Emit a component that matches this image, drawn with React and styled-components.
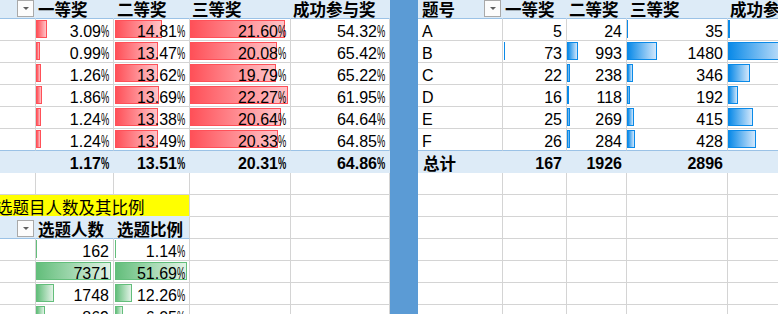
import React from 'react';
import styled, { createGlobalStyle } from 'styled-components';

// ============================================
// THEME VALUES
// ============================================

const GRID = '#d4d4d4';
const HEAD_BG = '#ddebf7';
const HEAD_LINE = '#9bc2e6';
const TITLE_BG = '#ffff00';

const TONES = {
  red: ['#ff5058', '#ffc4c8'],
  blue: ['#0a8ae8', '#d2e7fb'],
  green: ['#63be7b', '#e2f2e6'],
};

const LEFT_COLS = [36, 78, 76, 101, 99];
const RIGHT_COLS = [85, 64, 60, 101, 100];

// ============================================
// STYLED COMPONENTS
// ============================================

const GlobalStyle = createGlobalStyle`
  html, body {
    margin: 0;
    padding: 0;
    background: #fff;
  }
  body {
    width: 778px;
    height: 314px;
    overflow: hidden;
    font-family: "Liberation Sans", "Noto Sans CJK SC", sans-serif;
    font-size: 16px;
    color: #000;
  }
`;

const Window = styled.div`
  display: flex;
  width: 778px;
  height: 314px;
  overflow: hidden;
  background: #fff;
`;

const Pane = styled.div`
  flex: 0 0 ${p => p.$w}px;
  width: ${p => p.$w}px;
  display: flex;
  flex-direction: column;
  overflow: hidden;
`;

const Split = styled.div`
  flex: 0 0 28px;
  background: #5b9bd5;
`;

const Row = styled.div`
  display: flex;
  flex: 0 0 ${p => p.$h || 22}px;
  height: ${p => p.$h || 22}px;
`;

const Cell = styled.div`
  position: relative;
  flex: 0 0 ${p => p.$w}px;
  width: ${p => p.$w}px;
  height: 100%;
  box-sizing: border-box;
  display: flex;
  align-items: flex-end;
  justify-content: ${p => (p.$split ? 'space-between' : p.$right ? 'flex-end' : 'flex-start')};
  padding: 0 ${p => p.$pr ?? (p.$right ? 4 : 1)}px 1px ${p => p.$pl ?? 2}px;
  background: ${p => p.$bg || 'transparent'};
  border-right: 1px solid ${p => p.$vline || p.$bg || GRID};
  border-bottom: 1px solid ${p => p.$line || GRID};
  font-weight: ${p => (p.$bold ? 700 : 400)};
  line-height: 14px;
  white-space: nowrap;
  overflow: hidden;
`;

const HeadText = styled.span`
  position: relative;
  font-size: 16.5px;
  font-weight: ${p => (p.$light ? 400 : 700)};
  margin-left: ${p => p.$shift || 0}px;
`;

const Val = styled.span`
  position: relative;
  z-index: 1;
`;

const PctSign = styled.span`
  display: inline-block;
  width: 8px;
  transform: scaleX(0.58);
  transform-origin: 0 100%;
`;

const DropBtn = styled.span`
  flex: 0 0 17px;
  width: 17px;
  height: 17px;
  box-sizing: border-box;
  border: 1px solid #a9a9a9;
  background: #fcfcfc;
  display: flex;
  align-items: center;
  justify-content: center;

  &::after {
    content: '';
    border-left: 3px solid transparent;
    border-right: 3px solid transparent;
    border-top: 3px solid #5f5f5f;
  }
`;

const Bar = styled.span`
  position: absolute;
  left: ${p => p.$x || 0}px;
  top: 1px;
  height: 18px;
  width: ${p => p.$w}px;
  box-sizing: border-box;
  border: ${p => (p.$w > 2 ? `1px solid ${TONES[p.$tone][0]}` : 'none')};
  background: ${p =>
    p.$w > 2
      ? `linear-gradient(90deg, ${TONES[p.$tone][0]} 0%, ${TONES[p.$tone][1]} 100%)`
      : TONES[p.$tone][0]};
`;

// ============================================
// DATA
// ============================================

const prizeRows = [
  [['3.09%', 11], ['14.81%', 47], ['21.60%', 95], '54.32%'],
  [['0.99%', 4], ['13.47%', 43], ['20.08%', 87], '65.42%'],
  [['1.26%', 5], ['13.62%', 43], ['19.79%', 86], '65.22%'],
  [['1.86%', 6], ['13.69%', 44], ['22.27%', 98], '61.95%'],
  [['1.24%', 5], ['13.38%', 43], ['20.64%', 91], '64.64%'],
  [['1.24%', 5], ['13.49%', 43], ['20.33%', 88], '64.85%'],
];
const prizeTotal = ['1.17%', '13.51%', '20.31%', '64.86%'];

const pickRows = [
  [['162', 1], ['1.14%', 1]],
  [['7371', 75], ['51.69%', 72]],
  [['1748', 18], ['12.26%', 17]],
  [['869', 9], ['6.05%', 8]],
];

const questionRows = [
  { id: 'A', cells: [['5', 0], ['24', 0], ['35', 1], ['', 2]] },
  { id: 'B', cells: [['73', 1, 1], ['993', 11], ['1480', 30], ['', 60]] },
  { id: 'C', cells: [['22', 0], ['238', 3], ['346', 6], ['', 22]] },
  { id: 'D', cells: [['16', 0], ['118', 2], ['192', 3], ['', 10]] },
  { id: 'E', cells: [['25', 0], ['269', 3], ['415', 7], ['', 25]] },
  { id: 'F', cells: [['26', 0], ['284', 3], ['428', 8], ['', 28]] },
];
const questionTotal = ['167', '1926', '2896', ''];

// ============================================
// COMPONENT
// ============================================

function Num({ value }) {
  const s = String(value);
  if (s.endsWith('%')) {
    return (
      <Val>
        {s.slice(0, -1)}
        <PctSign>%</PctSign>
      </Val>
    );
  }
  return <Val>{s}</Val>;
}

function BarCell({ w, value, width, tone, x, line }) {
  return (
    <Cell $w={w} $right $line={line}>
      {width > 0 && <Bar $w={width} $tone={tone} $x={x} />}
      <Num value={value} />
    </Cell>
  );
}

function LeftPane() {
  const [a, b, c, d, e] = LEFT_COLS;
  return (
    <Pane $w={390}>
      <Row $h={19}>
        <Cell $w={a} $bg={HEAD_BG} $line={HEAD_LINE} $right $pr={1}>
          <DropBtn />
        </Cell>
        <Cell $w={b} $bg={HEAD_BG} $line={HEAD_LINE}><HeadText>一等奖</HeadText></Cell>
        <Cell $w={c} $bg={HEAD_BG} $line={HEAD_LINE} $pl={3}><HeadText>二等奖</HeadText></Cell>
        <Cell $w={d} $bg={HEAD_BG} $line={HEAD_LINE}><HeadText>三等奖</HeadText></Cell>
        <Cell $w={e} $bg={HEAD_BG} $line={HEAD_LINE}><HeadText>成功参与奖</HeadText></Cell>
      </Row>

      {prizeRows.map((row, i) => {
        const line = i === prizeRows.length - 1 ? HEAD_LINE : GRID;
        return (
          <Row key={i}>
            <Cell $w={a} $line={line} />
            <BarCell w={b} value={row[0][0]} width={row[0][1]} tone="red" line={line} />
            <BarCell w={c} value={row[1][0]} width={row[1][1]} tone="red" x={1} line={line} />
            <BarCell w={d} value={row[2][0]} width={row[2][1]} tone="red" line={line} />
            <Cell $w={e} $right $line={line}><Num value={row[3]} /></Cell>
          </Row>
        );
      })}

      <Row>
        <Cell $w={a} $bg={HEAD_BG} $line={HEAD_BG} />
        {prizeTotal.map((v, i) => (
          <Cell key={i} $w={LEFT_COLS[i + 1]} $bg={HEAD_BG} $line={HEAD_BG} $right $bold>
            <Num value={v} />
          </Cell>
        ))}
      </Row>

      <Row>
        {LEFT_COLS.map((w, i) => <Cell key={i} $w={w} />)}
      </Row>

      <Row>
        <Cell $w={a + b + c} $bg={TITLE_BG} $vline={GRID} $line={HEAD_BG} $pl={0}>
          <HeadText $light $shift={-4}>选题目人数及其比例</HeadText>
        </Cell>
        <Cell $w={d} />
        <Cell $w={e} />
      </Row>

      <Row>
        <Cell $w={a} $bg={HEAD_BG} $line={HEAD_LINE} $right $pr={1}>
          <DropBtn />
        </Cell>
        <Cell $w={b} $bg={HEAD_BG} $line={HEAD_LINE}><HeadText>选题人数</HeadText></Cell>
        <Cell $w={c} $bg={HEAD_BG} $line={HEAD_LINE} $vline={GRID} $pl={3}><HeadText>选题比例</HeadText></Cell>
        <Cell $w={d} />
        <Cell $w={e} />
      </Row>

      {pickRows.map((row, i) => (
        <Row key={i}>
          <Cell $w={a} />
          <BarCell w={b} value={row[0][0]} width={row[0][1]} tone="green" />
          <BarCell w={c} value={row[1][0]} width={row[1][1]} tone="green" x={1} />
          <Cell $w={d} />
          <Cell $w={e} />
        </Row>
      ))}
    </Pane>
  );
}

function RightPane() {
  const [q, ...rest] = RIGHT_COLS;
  const heads = ['一等奖', '二等奖', '三等奖', '成功参与奖'];
  return (
    <Pane $w={360}>
      <Row $h={19}>
        <Cell $w={q} $bg={HEAD_BG} $line={HEAD_LINE} $split $pl={4} $pr={1}>
          <HeadText>题号</HeadText>
          <DropBtn />
        </Cell>
        {heads.map((h, i) => (
          <Cell key={h} $w={rest[i]} $bg={HEAD_BG} $line={HEAD_LINE} $pl={i === 2 ? 3 : 2}>
            <HeadText>{h}</HeadText>
          </Cell>
        ))}
      </Row>

      {questionRows.map((row, i) => {
        const line = i === questionRows.length - 1 ? HEAD_LINE : GRID;
        return (
          <Row key={row.id}>
            <Cell $w={q} $line={line} $pl={4}><Val>{row.id}</Val></Cell>
            {row.cells.map(([v, bw, x], j) => (
              <BarCell key={j} w={rest[j]} value={v} width={bw} x={x} tone="blue" line={line} />
            ))}
          </Row>
        );
      })}

      <Row>
        <Cell $w={q} $bg={HEAD_BG} $line={HEAD_BG} $pl={5} $bold>
          <HeadText>总计</HeadText>
        </Cell>
        {questionTotal.map((v, i) => (
          <Cell key={i} $w={rest[i]} $bg={HEAD_BG} $line={HEAD_BG} $right $bold>
            <Num value={v} />
          </Cell>
        ))}
      </Row>

      {[0, 1, 2, 3, 4, 5, 6].map(r => (
        <Row key={r}>
          {RIGHT_COLS.map((w, i) => <Cell key={i} $w={w} />)}
        </Row>
      ))}
    </Pane>
  );
}

export default function App() {
  return (
    <>
      <GlobalStyle />
      <Window>
        <LeftPane />
        <Split />
        <RightPane />
      </Window>
    </>
  );
}
